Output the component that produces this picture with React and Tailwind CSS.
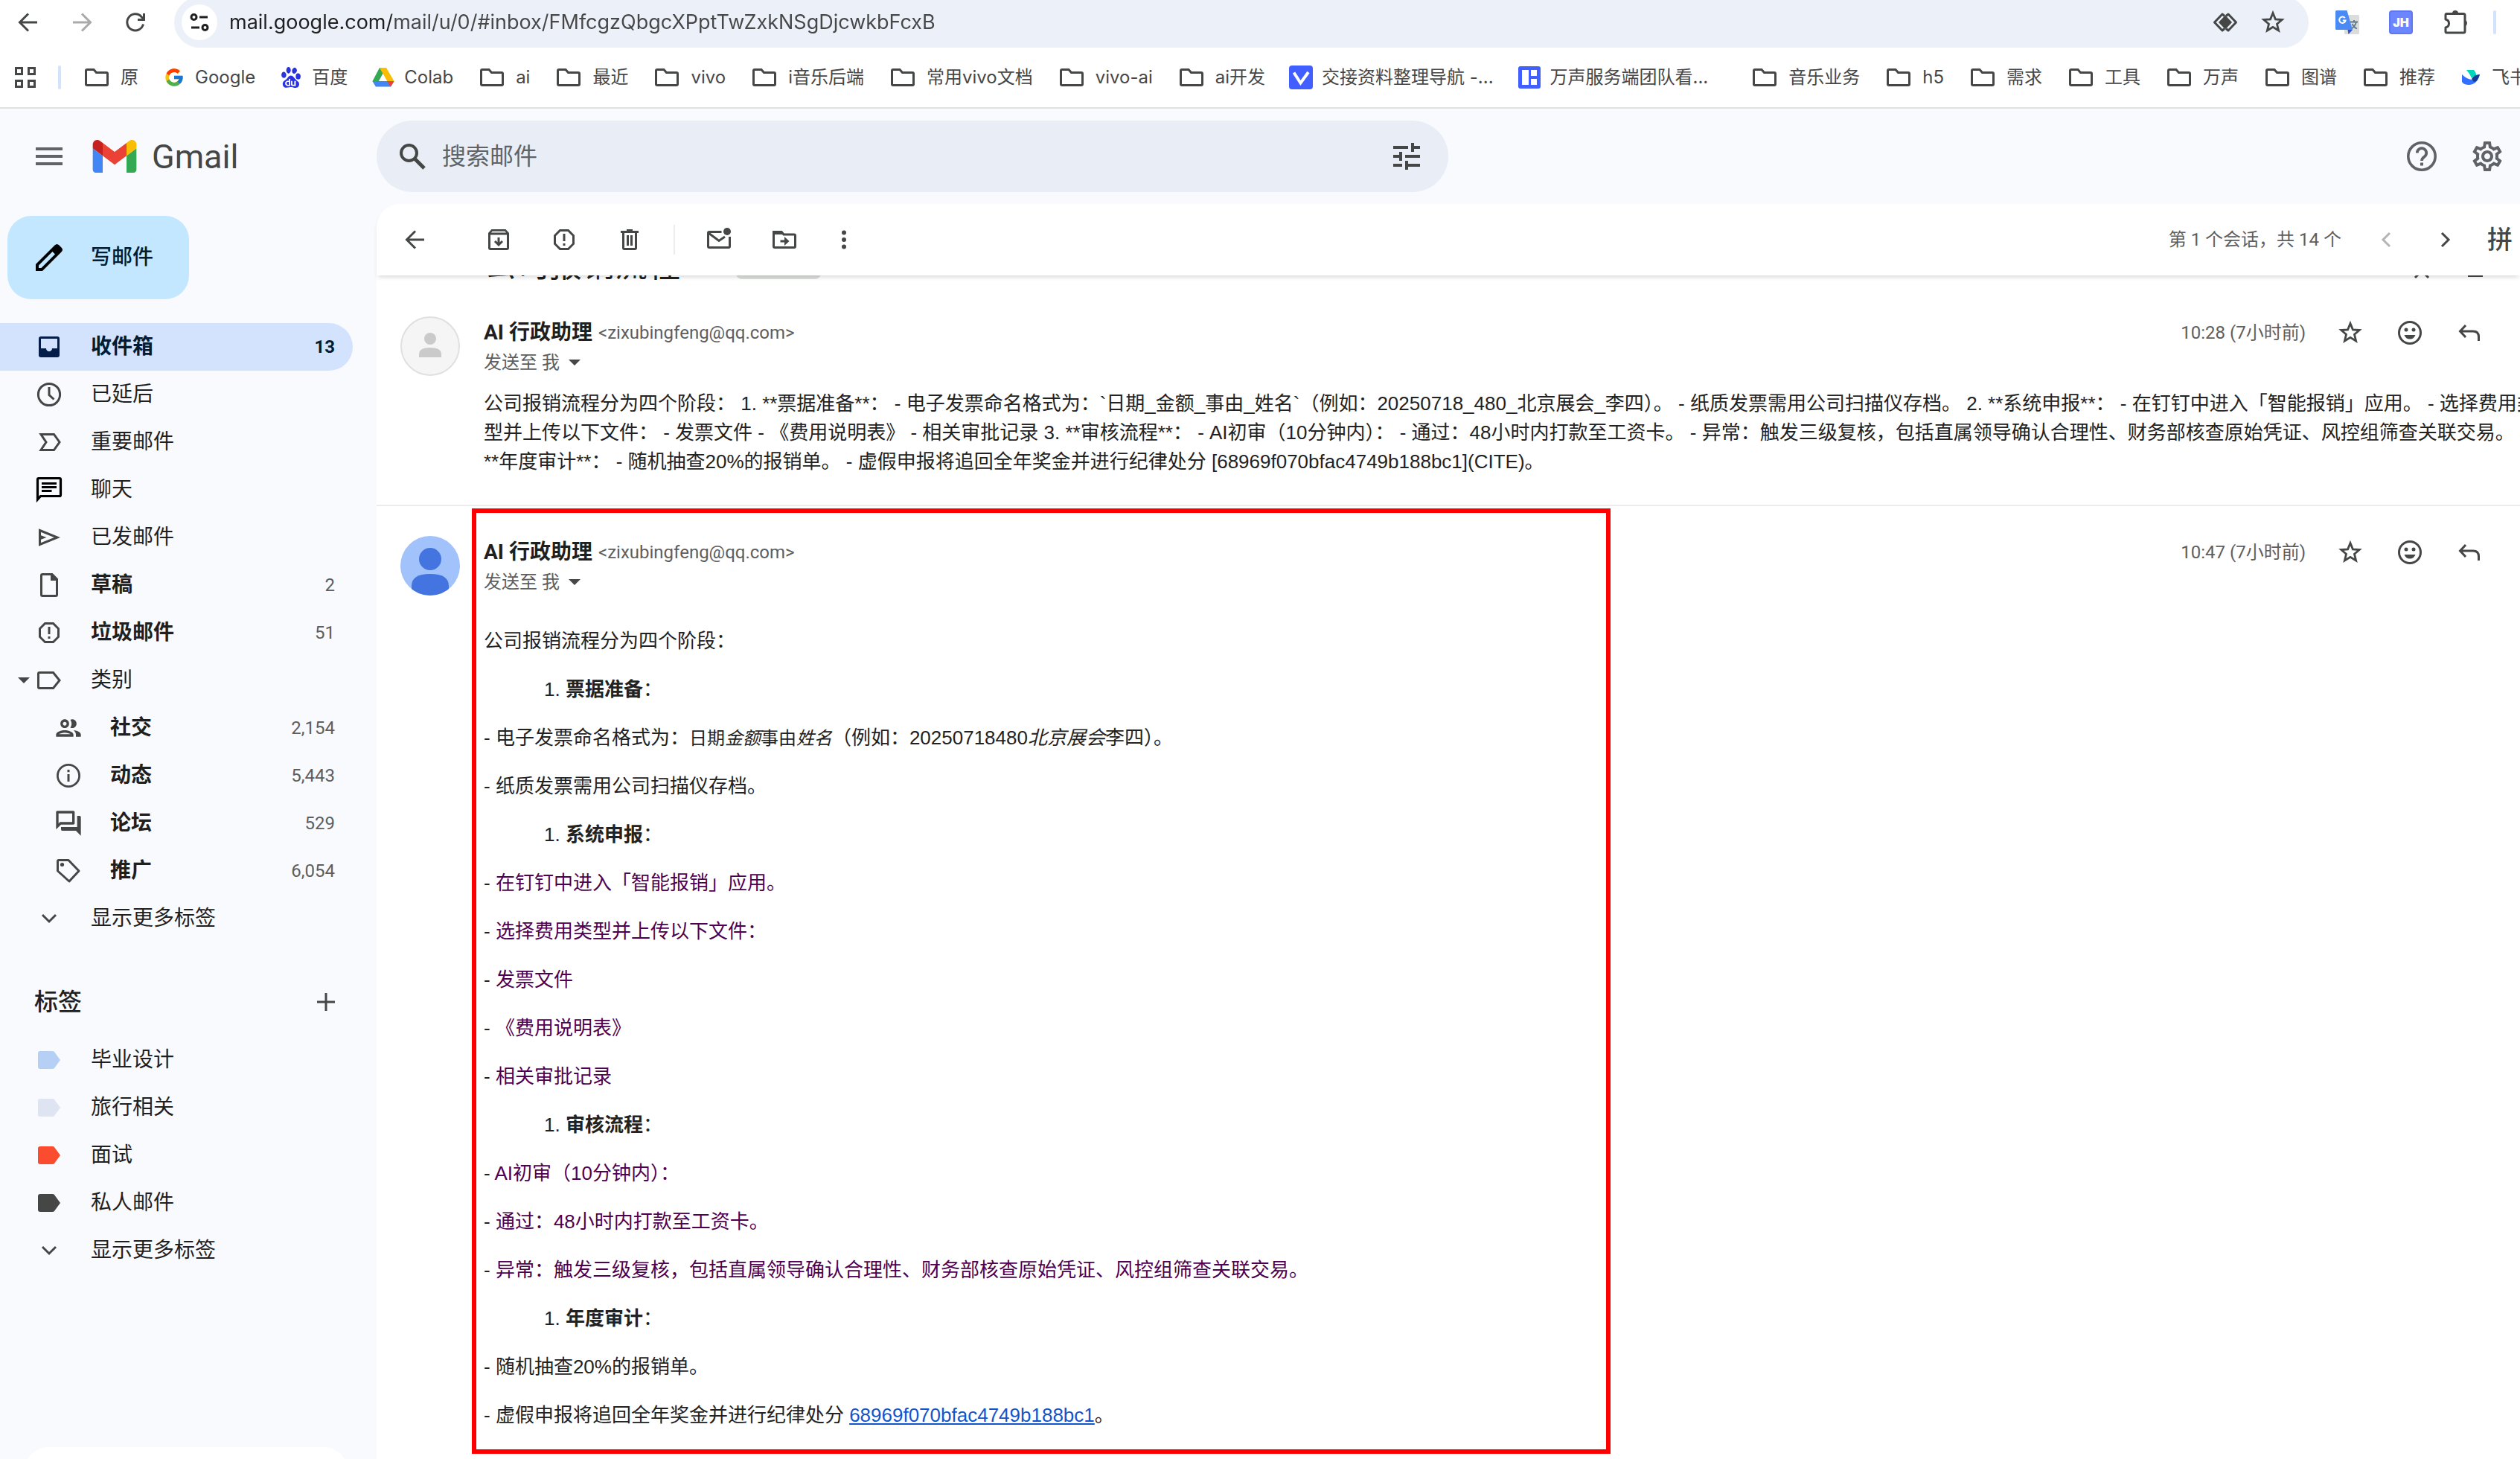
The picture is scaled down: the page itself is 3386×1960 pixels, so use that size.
import React from "react";
import { FcGoogle } from "react-icons/fc";
import { SiBaidu } from "react-icons/si";
import { MdOutlinePeople, MdOutlineForum, MdOutlineSettings } from "react-icons/md";

/* ---------- icons, all drawn on a 40 x 40 grid ---------- */

function Icon({ children, className = "text-[#444746]" }) {
  return (
    <svg
      viewBox="0 0 40 40"
      className={"block h-10 w-10 shrink-0 " + className}
      fill="none"
      stroke="currentColor"
      strokeWidth="3"
      aria-hidden="true"
    >
      {children}
    </svg>
  );
}

const BackIcon = ({ className }) => (
  <Icon className={className}>
    <path d="M32 20H9.500M20 8.500L8.500 20L20 31.500" />
  </Icon>
);
const ForwardIcon = ({ className }) => (
  <Icon className={className}>
    <path d="M8 20H30.500M20 8.500L31.500 20L20 31.500" />
  </Icon>
);
const ReloadIcon = () => (
  <Icon>
    <path d="M30.500 22.500A11 11 0 1 1 28 12.500L31.500 16" />
    <path d="M31.500 8V16.500H23" />
  </Icon>
);
const TuneSiteIcon = () => (
  <Icon className="text-[#1f1f1f]">
    <circle cx="12.500" cy="13" r="3.500" />
    <path d="M20 13H31M9 27H20" />
    <circle cx="27.500" cy="27" r="3.500" />
  </Icon>
);
const LensIcon = () => (
  <Icon>
    <path d="M19 28.500L16 31L5.500 20L16 9L19 11.500M21 28.500L24 31L34.500 20L24 9L21 11.500" strokeLinejoin="round" />
    <path d="M20 10.500L29 20L20 29.500L11 20Z" fill="currentColor" stroke="none" />
  </Icon>
);
const StarIcon = () => (
  <Icon>
    <path d="M20 7.500L23.400 15.800L32.300 16.500L25.500 22.300L27.600 31L20 26.300L12.400 31L14.500 22.300L7.700 16.500L16.600 15.800Z" strokeWidth="2.800" />
  </Icon>
);
const PuzzleIcon = () => (
  <Icon>
    <path
      d="M7.500 8.500H30Q32 8.500 32 10.500V32Q32 34 30 34H7.500Q6 34 6 32.500V27Q10.500 26 10.500 21.500Q10.500 17 6 16V10Q6 8.500 7.500 8.500Z"
      strokeLinejoin="round"
    />
    <path d="M15 8a4 4 0 0 1 8 0zM32 17a4.200 4.200 0 0 1 0 8z" fill="currentColor" stroke="none" />
  </Icon>
);
const GridIcon = () => (
  <Icon>
    <path d="M7.500 7.500H15.500V15.500H7.500ZM24.500 7.500H32.500V15.500H24.500ZM7.500 24.500H15.500V32.500H7.500ZM24.500 24.500H32.500V32.500H24.500Z" />
  </Icon>
);
const MenuIcon = () => (
  <Icon className="text-[#5f6368]">
    <path d="M2 10H38M2 20H38M2 30H38" strokeWidth="4" />
  </Icon>
);
const SearchIcon = () => (
  <Icon>
    <circle cx="15.500" cy="15.500" r="10.500" strokeWidth="4" />
    <path d="M23 23L36 36" strokeWidth="5" />
  </Icon>
);
const TuneIcon = () => (
  <Icon>
    <path d="M2 8H22M28 8H38M2 20H10M18 20H38M2 32H14M20 32H38M28 2V14M12 14V26M20 26V38" strokeWidth="4" />
  </Icon>
);
const HelpIcon = () => (
  <Icon className="text-[#5f6368]">
    <circle cx="20" cy="20" r="18.200" strokeWidth="3.600" />
    <path d="M13.800 15.500a6.200 6.200 0 1 1 9.800 5Q20 23 20 26" strokeWidth="3.800" />
    <path d="M20 28.500V32.500" strokeWidth="4" />
  </Icon>
);
const PencilIcon = () => (
  <Icon className="text-black">
    <path d="M2 38V29L27.500 3.500Q30.500 .5 33.500 3.500L36.500 6.500Q39.500 9.500 36.500 12.500L11 38ZM6 34H9.500L28 15.500L24.500 12L6 30.500Z" fill="currentColor" fillRule="evenodd" stroke="none" />
  </Icon>
);
const InboxIcon = () => (
  <Icon className="text-[#041e49]">
    <path
      d="M9 6h22a3 3 0 0 1 3 3v22a3 3 0 0 1-3 3H9a3 3 0 0 1-3-3V9a3 3 0 0 1 3-3zM9 9v13h7c0 2.500 2 4 4 4s4-1.500 4-4h7V9z"
      fill="currentColor"
      fillRule="evenodd"
      stroke="none"
    />
  </Icon>
);
const ClockIcon = () => (
  <Icon>
    <circle cx="20" cy="20" r="14.600" />
    <path d="M20 10V20.500L26.500 26.500" />
  </Icon>
);
const ImportantIcon = () => (
  <Icon>
    <path d="M9 9.500H26.500L34 20L26.500 30.500H9L16 20Z" />
  </Icon>
);
const ChatIcon = () => (
  <Icon className="text-black">
    <path d="M4.500 33V6Q4.500 4.500 6 4.500H34Q35.500 4.500 35.500 6V27Q35.500 28.500 34 28.500H8.500Z" strokeWidth="3.200" />
    <path d="M10 11.500H30M10 16.500H30M10 21.500H23.500" />
  </Icon>
);
const SendIcon = () => (
  <Icon>
    <path d="M7.500 10.500L31 20L7.500 29.500Z" />
    <path d="M7 16.500L16.500 20L7 23.500Z" fill="currentColor" stroke="none" />
  </Icon>
);
const DraftIcon = () => (
  <Icon>
    <path d="M11 5.500H24L30.500 12V33Q30.500 34.500 29 34.500H11Q9.500 34.500 9.500 33V7Q9.500 5.500 11 5.500Z" />
    <path d="M22 5H25L31 11V14H22Z" fill="currentColor" stroke="none" />
  </Icon>
);
const SpamIcon = () => (
  <Icon>
    <path d="M14.500 7.500H25.500L32.500 14.500V25.500L25.500 32.500H14.500L7.500 25.500V14.500Z" />
    <path d="M20 12V22M20 25V28" />
  </Icon>
);
const LabelIcon = () => (
  <Icon>
    <path d="M7 9.500H25.500L34 20L25.500 30.500H7Q5.500 30.500 5.500 29V11Q5.500 9.500 7 9.500Z" />
  </Icon>
);
const PeopleIcon = () => <MdOutlinePeople className="h-10 w-10 shrink-0 text-[#444746]" aria-hidden="true" />;
const InfoIcon = () => (
  <Icon>
    <circle cx="20" cy="20" r="14.600" strokeWidth="2.800" />
    <path d="M20 18V28M20 12V15.200" />
  </Icon>
);
const ForumIcon = () => <MdOutlineForum className="h-10 w-10 shrink-0 text-[#444746]" aria-hidden="true" />;
const TagIcon = () => (
  <Icon>
    <path d="M7 5.500H20L34 20L21 34L5.500 20V7Q5.500 5.500 7 5.500Z" strokeLinejoin="round" />
    <circle cx="11.500" cy="11.500" r="2.600" fill="currentColor" stroke="none" />
  </Icon>
);
const ChevronDown = () => (
  <Icon>
    <path d="M11 15L20 24L29 15" />
  </Icon>
);
const ChevronLeft = ({ className }) => (
  <Icon className={className}>
    <path d="M25 11L16 20L25 29" />
  </Icon>
);
const ChevronRight = () => (
  <Icon>
    <path d="M15 11L24 20L15 29" />
  </Icon>
);
const PlusIcon = () => (
  <Icon>
    <path d="M20 8V32M8 20H32" />
  </Icon>
);
const ArchiveIcon = () => (
  <Icon>
    <path d="M7.500 12V31Q7.500 32.500 9 32.500H31Q32.500 32.500 32.500 31V12" />
    <path d="M6 13.500V11L10.500 6H29.500L34 11V13.500ZM10 10.500H30L28.500 8.800H11.500Z" fill="currentColor" fillRule="evenodd" stroke="none" />
    <path d="M20 17V26M15 22L20 27L25 22" />
  </Icon>
);
const TrashIcon = () => (
  <Icon>
    <path d="M11.500 10V31Q11.500 32.500 13 32.500H27Q28.500 32.500 28.500 31V10M8 9.500H32M16 7.500H24M17.500 14V28M22.500 14V28" />
  </Icon>
);
const UnreadIcon = () => (
  <Icon>
    <path d="M23.500 9.500H7Q5.500 9.500 5.500 11V29Q5.500 30.500 7 30.500H33Q34.500 30.500 34.500 29V16M6 11L20 21.500L28 16" />
    <circle cx="31" cy="9" r="5" fill="currentColor" stroke="none" />
  </Icon>
);
const MoveIcon = () => (
  <Icon>
    <path d="M5.500 9.500H16L19 13H33Q34.500 13 34.500 14.500V29Q34.500 30.500 33 30.500H7Q5.500 30.500 5.500 29Z" />
    <path d="M4.500 8.500H17L20 13H4.500ZM20 16L26.500 22L20 28V23.500H14.500V20.500H20Z" fill="currentColor" stroke="none" />
  </Icon>
);
const MoreIcon = () => (
  <Icon>
    <g fill="currentColor" stroke="none">
      <circle cx="20" cy="10.500" r="3" />
      <circle cx="20" cy="20" r="3" />
      <circle cx="20" cy="29.500" r="3" />
    </g>
  </Icon>
);
const CollapseIcon = () => (
  <Icon>
    <path d="M11 4L20 13L29 4M11 36L20 27L29 36" />
  </Icon>
);
const PrintIcon = () => (
  <Icon>
    <path d="M11.500 12V6.500H28.500V12M11.500 27H5.500V13.500H34.500V27H28.500M11.500 21.500H28.500V33.500H11.500Z" />
  </Icon>
);
const SmileIcon = () => (
  <Icon>
    <circle cx="20" cy="20" r="14.500" />
    <g fill="currentColor" stroke="none">
      <circle cx="15" cy="16" r="2.500" />
      <circle cx="25" cy="16" r="2.500" />
      <path d="M12.500 23H27.500Q25.500 28.500 20 28.500Q14.500 28.500 12.500 23Z" />
    </g>
  </Icon>
);
const ReplyIcon = () => (
  <Icon>
    <path d="M15 10L7.500 18L15 26M8 18H25Q32.500 18 32.500 25.500V31" />
  </Icon>
);

function GmailLogo() {
  return (
    <svg viewBox="52 42 88 66" className="h-11 w-15 shrink-0" aria-hidden="true">
      <path fill="#4285f4" d="M58 108h14V74L52 59v43c0 3.320 2.690 6 6 6" />
      <path fill="#34a853" d="M120 108h14c3.320 0 6-2.690 6-6V59l-20 15" />
      <path fill="#fbbc04" d="M120 48v26l20-15v-8c0-7.420-8.470-11.650-14.400-7.200" />
      <path fill="#ea4335" d="M72 74V48l24 18 24-18v26L96 92" />
      <path fill="#c5221f" d="M52 51v8l20 15V48l-5.600-4.200c-5.940-4.450-14.400-.22-14.400 7.200" />
    </svg>
  );
}

/* ---------- bookmark glyphs ---------- */

const Folder = () => (
  <svg viewBox="0 0 32 32" className="h-8 w-8 shrink-0" fill="none" stroke="#444746" strokeWidth="3" aria-hidden="true">
    <path d="M3 5.500H12L15.500 9.500H29Q30.500 9.500 30.500 11V25Q30.500 26.500 29 26.500H3Q1.500 26.500 1.500 25V7Q1.500 5.500 3 5.500Z" />
  </svg>
);
const Drive = () => (
  <svg viewBox="0 0 32 32" className="h-8 w-8 shrink-0" aria-hidden="true">
    <path d="M11 3H20L11.500 18.500L6 28L1.500 21Z" fill="#34a853" />
    <path d="M11 3H20L30.500 21H21Z" fill="#fbbc04" />
    <path d="M1.500 21H30.500L26 28.500H6Z" fill="#4285f4" />
    <path d="M15.500 11L21 21H10Z" fill="#fff" />
    <path d="M21 21H30.500L26 28.500Z" fill="#ea4335" />
  </svg>
);
const VMark = () => (
  <svg viewBox="0 0 32 32" className="h-8 w-8 shrink-0" aria-hidden="true">
    <rect width="32" height="32" rx="4" fill="#415fff" />
    <path d="M6.500 9.500L15.500 23.500L26 9" fill="none" stroke="#fff" strokeWidth="4" />
  </svg>
);
const Board = () => (
  <svg viewBox="0 0 32 32" className="h-8 w-8 shrink-0" aria-hidden="true">
    <rect x="1" y="1" width="30" height="30" rx="3" fill="#415fff" />
    <path d="M6 6H15V26H6ZM18 6H26V14H18ZM18 18H26V26H18Z" fill="#fff" />
  </svg>
);
const Feishu = () => (
  <svg viewBox="0 0 32 32" className="h-8 w-8 shrink-0" aria-hidden="true">
    <path d="M10 6H20Q23 9 23.500 13L17 17Q14 10 10 6Z" fill="#00d6b9" />
    <path d="M4 12Q11 19 18 19Q21 13 28 12Q25 25 14 26Q6 26 4 22Z" fill="#3370ff" />
    <path d="M17 18Q21 12 28 12Q25 22 20 22Z" fill="#133c9a" />
  </svg>
);

const bookmarks = [
  { icon: "folder", text: "原" },
  { icon: "google", text: "Google" },
  { icon: "baidu", text: "百度" },
  { icon: "drive", text: "Colab" },
  { icon: "folder", text: "ai" },
  { icon: "folder", text: "最近" },
  { icon: "folder", text: "vivo" },
  { icon: "folder", text: "i音乐后端" },
  { icon: "folder", text: "常用vivo文档" },
  { icon: "folder", text: "vivo-ai" },
  { icon: "folder", text: "ai开发" },
  { icon: "v", text: "交接资料整理导航 -..." },
  { icon: "board", text: "万声服务端团队看...", last: true },
  { icon: "folder", text: "音乐业务" },
  { icon: "folder", text: "h5" },
  { icon: "folder", text: "需求" },
  { icon: "folder", text: "工具" },
  { icon: "folder", text: "万声" },
  { icon: "folder", text: "图谱" },
  { icon: "folder", text: "推荐" },
  { icon: "feishu", text: "飞书" },
];

const bookmarkIcons = {
  folder: <Folder />,
  google: <FcGoogle className="h-7 w-8 shrink-0" aria-hidden="true" />,
  baidu: <SiBaidu className="h-7 w-8 shrink-0 text-[#2932e1]" aria-hidden="true" />,
  drive: <Drive />,
  v: <VMark />,
  board: <Board />,
  feishu: <Feishu />,
};

function BrowserChrome() {
  return (
    <header className="shrink-0 bg-white font-['Inter','Noto_Sans_CJK_SC',sans-serif]">
      <div className="flex h-[60px] items-center">
        <div className="flex items-center gap-8 pl-[18px]">
          <button aria-label="后退"><BackIcon /></button>
          <button aria-label="前进"><ForwardIcon className="text-[#a9abaa]" /></button>
          <button aria-label="重新加载"><ReloadIcon /></button>
        </div>
        <div className="ml-8 flex h-[68px] flex-1 items-center rounded-full bg-[#ecf0f9] pr-3 pl-[10px]">
          <button aria-label="查看网站信息" className="flex h-12 w-12 items-center justify-center rounded-full bg-white">
            <TuneSiteIcon />
          </button>
          <input
            aria-label="地址栏"
            defaultValue="mail.google.com/mail/u/0/#inbox/FMfcgzQbgcXPptTwZxkNSgDjcwkbFcxB"
            className="ml-4 min-w-0 flex-1 bg-[linear-gradient(to_right,#1f1f1f_218px,#474747_218px)] bg-clip-text text-[27px] leading-10 text-transparent outline-none"
          />
          <div className="flex items-center gap-6 pr-4">
            <button aria-label="搜索此页面"><LensIcon /></button>
            <button aria-label="为此标签页添加书签"><StarIcon /></button>
          </div>
        </div>
        <div className="flex items-center pl-9">
          <button aria-label="Google 翻译">
            <svg viewBox="0 0 32 32" className="h-8 w-8" aria-hidden="true">
              <rect x="12" y="6" width="20" height="26" rx="1.500" fill="#dcdcdc" />
              <path d="M20 15.500H30M25 13V15.500M28 15.500Q26.500 21.500 21 25M22.500 18Q25 23 29 24.500" stroke="#607988" strokeWidth="1.800" fill="none" />
              <path d="M16.500 26H23L17.500 32Z" fill="#3352c9" />
              <path d="M1.500 0H15.500L23 26H1.500Q0 26 0 24.500V1.500Q0 0 1.500 0Z" fill="#4a8af4" />
              <path d="M12.800 10.200A4.200 4.200 0 1 0 13.600 13.500H9.800" stroke="#fff" strokeWidth="2" fill="none" />
            </svg>
          </button>
          <button aria-label="JH 扩展" className="ml-10 flex h-8 w-8 items-center justify-center rounded-sm border-2 border-[#5f78f0] bg-[#6b86ff] text-base leading-none font-black text-[#fdfdea]">
            JH
          </button>
          <button aria-label="扩展程序" className="ml-[38px]"><PuzzleIcon /></button>
          <span className="mr-8 ml-[30px] h-8 w-1 rounded-full bg-[#d3e3fd]" />
        </div>
      </div>
      <nav aria-label="书签栏" className="flex h-[86px] items-center overflow-hidden border-b-2 border-[#e0e2e0] pt-1 pl-[14px]">
        <button aria-label="标签页分组"><GridIcon /></button>
        <span className="ml-6 h-8 w-1 shrink-0 rounded-full bg-[#d3e3fd]" />
        <ul className="ml-8 flex items-center gap-9">
          {bookmarks.map((b) => (
            <li key={b.text} className={(b.last ? "mr-6 " : "") + (b.icon === "folder" ? "" : "-ml-1")}>
              <a href="#" className={"flex items-center text-2xl whitespace-nowrap text-[#474747] " + (b.icon === "folder" ? "gap-4" : "gap-3")}>
                {bookmarkIcons[b.icon]}
                {b.text}
              </a>
            </li>
          ))}
        </ul>
      </nav>
    </header>
  );
}

function GmailHeader() {
  return (
    <div className="flex h-32 shrink-0 items-center">
      <div className="flex w-[506px] shrink-0 items-center pl-[46px]">
        <button aria-label="主菜单"><MenuIcon /></button>
        <a href="#" className="ml-[38px] flex items-center gap-5 text-[45px] leading-none text-[#444746]">
          <GmailLogo />
          Gmail
        </a>
      </div>
      <form role="search" className="flex h-24 w-[1440px] items-center rounded-full bg-[#e9eef6] pr-9 pl-7">
        <button type="button" aria-label="搜索"><SearchIcon /></button>
        <input
          type="text"
          aria-label="搜索邮件"
          placeholder="搜索邮件"
          className="ml-5 min-w-0 flex-1 bg-transparent text-[32px] leading-10 outline-none placeholder:text-[#5f6368]"
        />
        <button type="button" aria-label="显示搜索选项"><TuneIcon /></button>
      </form>
      <div className="ml-auto flex items-center gap-11 pr-5">
        <button aria-label="支持"><HelpIcon /></button>
        <button aria-label="设置"><MdOutlineSettings className="h-12 w-12 text-[#5f6368]" aria-hidden="true" /></button>
      </div>
    </div>
  );
}

const folders = [
  { text: "收件箱", icon: <InboxIcon />, count: "13", active: true },
  { text: "已延后", icon: <ClockIcon /> },
  { text: "重要邮件", icon: <ImportantIcon /> },
  { text: "聊天", icon: <ChatIcon /> },
  { text: "已发邮件", icon: <SendIcon /> },
  { text: "草稿", icon: <DraftIcon />, count: "2", bold: true },
  { text: "垃圾邮件", icon: <SpamIcon />, count: "51", bold: true },
  { text: "类别", icon: <LabelIcon />, open: true },
  { text: "社交", icon: <PeopleIcon />, count: "2,154", bold: true, sub: true },
  { text: "动态", icon: <InfoIcon />, count: "5,443", bold: true, sub: true },
  { text: "论坛", icon: <ForumIcon />, count: "529", bold: true, sub: true },
  { text: "推广", icon: <TagIcon />, count: "6,054", bold: true, sub: true },
  { text: "显示更多标签", icon: <ChevronDown /> },
];

const LabelFill = ({ className }) => (
  <Icon className={className}>
    <path d="M8 8H24.500Q26 8 27 9L35 20L27 31Q26 32 24.500 32H8Q5 32 5 29V11Q5 8 8 8Z" fill="currentColor" stroke="none" />
  </Icon>
);

const labels = [
  { text: "毕业设计", icon: <LabelFill className="text-[#b6cff5]" /> },
  { text: "旅行相关", icon: <LabelFill className="text-[#dfe4f2]" /> },
  { text: "面试", icon: <LabelFill className="text-[#fb4c2f]" /> },
  { text: "私人邮件", icon: <LabelFill className="text-[#464646]" /> },
  { text: "显示更多标签", icon: <ChevronDown /> },
];

function NavItem({ item }) {
  const tone = item.active ? "bg-[#d3e3fd] font-bold text-[#001d35]" : "text-[#1f1f1f]";
  return (
    <li>
      <a href="#" className={"flex h-16 items-center rounded-r-full pr-6 " + (item.sub ? "pl-[50px] " : "pl-6 ") + tone}>
        <span className="flex w-[22px] shrink-0 items-center">
          {item.open && (
            <svg viewBox="0 0 16 8" className="h-2 w-4" aria-hidden="true">
              <path d="M0 0H16L8 8Z" fill="#444746" />
            </svg>
          )}
        </span>
        {item.icon}
        <span className={"ml-9 flex-1 text-[28px] leading-10 " + (item.bold ? "font-bold" : "")}>{item.text}</span>
        {item.count && <span className={"text-2xl " + (item.active ? "" : "text-[#5e5e5e]")}>{item.count}</span>}
      </a>
    </li>
  );
}

function Sidebar() {
  return (
    <aside className="flex w-[506px] shrink-0 flex-col overflow-hidden pt-4 pr-8">
      <button className="ml-[10px] flex h-28 w-[244px] shrink-0 items-center gap-9 rounded-4xl bg-[#c2e7ff] pl-9 text-[28px] font-medium text-[#001d35]">
        <PencilIcon />
        写邮件
      </button>
      <ul className="mt-8">
        {folders.map((f) => (
          <NavItem key={f.text} item={f} />
        ))}
      </ul>
      <div className="mt-12 mb-[14px] flex h-16 items-center justify-between pr-4 pl-[46px]">
        <h2 className="text-[32px] font-medium text-[#1f1f1f]">标签</h2>
        <button aria-label="新建标签"><PlusIcon /></button>
      </div>
      <ul>
        {labels.map((f) => (
          <NavItem key={f.text} item={f} />
        ))}
      </ul>
      <div className="mt-auto mr-[7px] -mb-12 ml-[33px] h-16 shrink-0 rounded-4xl bg-white" />
    </aside>
  );
}

function Toolbar() {
  return (
    <div className="relative z-10 flex h-24 shrink-0 items-center rounded-tl-4xl bg-white pr-[10px] pl-8 shadow-[0_4px_6px_-2px_rgba(0,0,0,0.16)]">
      <button aria-label="返回收件箱"><BackIcon /></button>
      <div className="ml-[72px] flex items-center gap-12">
        <button aria-label="归档"><ArchiveIcon /></button>
        <button aria-label="举报垃圾邮件"><SpamIcon /></button>
        <button aria-label="删除"><TrashIcon /></button>
      </div>
      <span className="mx-[39px] h-10 w-0.5 bg-[#ececec]" />
      <div className="flex items-center gap-12">
        <button aria-label="标记为未读"><UnreadIcon /></button>
        <button aria-label="移至"><MoveIcon /></button>
        <button aria-label="更多" className="-ml-2"><MoreIcon /></button>
      </div>
      <span className="ml-auto text-2xl text-[#5e5e5e]">第 1 个会话，共 14 个</span>
      <button aria-label="上一个" className="ml-10"><ChevronLeft className="text-[#b4b5b4]" /></button>
      <button aria-label="下一个" className="ml-10"><ChevronRight /></button>
      <button aria-label="输入法" className="ml-9 text-[34px] font-medium text-[#444746]">拼</button>
    </div>
  );
}

function MessageHeader({ time }) {
  return (
    <div className="flex items-start">
      <div className="flex-1 pt-0.5">
        <div className="flex h-10 items-center gap-2 leading-10">
          <h3 className="text-[28px] font-bold text-[#1f1f1f]">AI 行政助理</h3>
          <span className="text-2xl text-[#5e5e5e]">&lt;zixubingfeng@qq.com&gt;</span>
        </div>
        <button aria-label="显示详细信息" className="flex h-10 items-center gap-3 text-2xl text-[#5e5e5e]">
          发送至 我
          <svg viewBox="0 0 16 8" className="h-2 w-4" aria-hidden="true">
            <path d="M0 0H16L8 8Z" fill="#444746" />
          </svg>
        </button>
      </div>
      <div className="flex h-11 items-center gap-10 pr-12">
        <time className="text-2xl text-[#5e5e5e]">{time}</time>
        <button aria-label="未加星标"><StarIcon /></button>
        <button aria-label="添加回应"><SmileIcon /></button>
        <button aria-label="回复"><ReplyIcon /></button>
      </div>
    </div>
  );
}

function Avatar({ blue }) {
  return (
    <svg viewBox="0 0 80 80" className="h-20 w-20 shrink-0" aria-hidden="true">
      {blue ? (
        <>
          <clipPath id="avatar-clip">
            <circle cx="40" cy="40" r="40" />
          </clipPath>
          <g clipPath="url(#avatar-clip)">
            <rect width="80" height="80" fill="#a1c2fa" />
            <circle cx="40" cy="31" r="15" fill="#4374e0" />
            <path d="M15 80V67Q15 51 40 51Q65 51 65 67V80Z" fill="#4374e0" />
          </g>
        </>
      ) : (
        <>
          <circle cx="40" cy="40" r="39" fill="#f5f5f5" stroke="#e0e0e0" strokeWidth="2" />
          <circle cx="40" cy="30" r="8" fill="#cacaca" />
          <path d="M25 55V51Q25 42 40 42Q55 42 55 51V55Z" fill="#cacaca" />
        </>
      )}
    </svg>
  );
}

const Step = ({ children }) => (
  <ol className="list-decimal pl-[110px]">
    <li>
      <strong>{children}</strong>：
    </li>
  </ol>
);

const Quoted = ({ children }) => (
  <p>
    - <span className="text-[#500050]">{children}</span>
  </p>
);

const bodyFont = "font-['Liberation_Sans','Noto_Sans_CJK_SC',sans-serif] text-[26px] leading-[39px] text-[#222222]";

function Conversation() {
  return (
    <div className="flex-1 overflow-hidden">
      <div className="-mt-[41px] flex h-14 items-center pr-10 pl-36">
        <h1 className="text-[44px] leading-[56px] text-[#1f1f1f]">公司报销流程</h1>
        <span aria-label="收件箱" className="ml-[75px] h-9 w-[114px] rounded-lg bg-[#dddfdd]" />
        <button aria-label="全部收起" className="ml-auto"><CollapseIcon /></button>
        <button aria-label="全部打印" className="ml-8"><PrintIcon /></button>
      </div>

      <article className="flex gap-8 border-b-2 border-[#ececec] pt-10 pb-[38px] pl-8">
        <Avatar />
        <div className="min-w-0 flex-1">
          <MessageHeader time="10:28 (7小时前)" />
          <p className={"mt-4 whitespace-nowrap " + bodyFont}>
            公司报销流程分为四个阶段： 1. **票据准备**： - 电子发票命名格式为：`日期_金额_事由_姓名`（例如：20250718_480_北京展会_李四）。 - 纸质发票需用公司扫描仪存档。 2. **系统申报**： - 在钉钉中进入「智能报销」应用。 - 选择费用类
            <br />
            型并上传以下文件： - 发票文件 - 《费用说明表》 - 相关审批记录 3. **审核流程**： - AI初审（10分钟内）： - 通过：48小时内打款至工资卡。 - 异常：触发三级复核，包括直属领导确认合理性、财务部核查原始凭证、风控组筛查关联交易。 4.
            <br />
            **年度审计**： - 随机抽查20%的报销单。 - 虚假申报将追回全年奖金并进行纪律处分 [68969f070bfac4749b188bc1](CITE)。
          </p>
        </div>
      </article>

      <article className="relative flex gap-8 pt-10 pl-8">
        <Avatar blue />
        <div className="min-w-0 flex-1">
          <MessageHeader time="10:47 (7小时前)" />
          <div className={"mt-10 flex flex-col gap-[26px] " + bodyFont}>
            <p>公司报销流程分为四个阶段：</p>
            <Step>票据准备</Step>
            <p>
              - 电子发票命名格式为：
              <code className="font-['Liberation_Mono','Noto_Sans_CJK_SC',monospace] text-2xl leading-none">
                日期<em>金额</em>事由<em>姓名</em>
              </code>
              （例如：20250718480<em>北京展会</em>李四）。
            </p>
            <p>- 纸质发票需用公司扫描仪存档。</p>
            <Step>系统申报</Step>
            <Quoted>在钉钉中进入「智能报销」应用。</Quoted>
            <Quoted>选择费用类型并上传以下文件：</Quoted>
            <Quoted>发票文件</Quoted>
            <Quoted>《费用说明表》</Quoted>
            <Quoted>相关审批记录</Quoted>
            <Step>审核流程</Step>
            <Quoted>AI初审（10分钟内）：</Quoted>
            <Quoted>通过：48小时内打款至工资卡。</Quoted>
            <Quoted>异常：触发三级复核，包括直属领导确认合理性、财务部核查原始凭证、风控组筛查关联交易。</Quoted>
            <Step>年度审计</Step>
            <p>- 随机抽查20%的报销单。</p>
            <p>
              - 虚假申报将追回全年奖金并进行纪律处分{" "}
              <a href="#" className="text-[#1155cc] underline">68969f070bfac4749b188bc1</a>。
            </p>
          </div>
        </div>
        <div className="pointer-events-none absolute top-[3px] left-32 h-[1270px] w-[1530px] border-6 border-[#ff0000]" />
      </article>
    </div>
  );
}

export default function App() {
  return (
    <div
      lang="zh-CN"
      className="flex h-screen flex-col overflow-hidden bg-[#f9fafe] font-['Roboto','Noto_Sans_CJK_SC',sans-serif]"
    >
      <BrowserChrome />
      <GmailHeader />
      <div className="flex min-h-0 flex-1">
        <Sidebar />
        <main className="flex min-w-0 flex-1 flex-col rounded-tl-4xl bg-white">
          <Toolbar />
          <Conversation />
        </main>
      </div>
    </div>
  );
}
